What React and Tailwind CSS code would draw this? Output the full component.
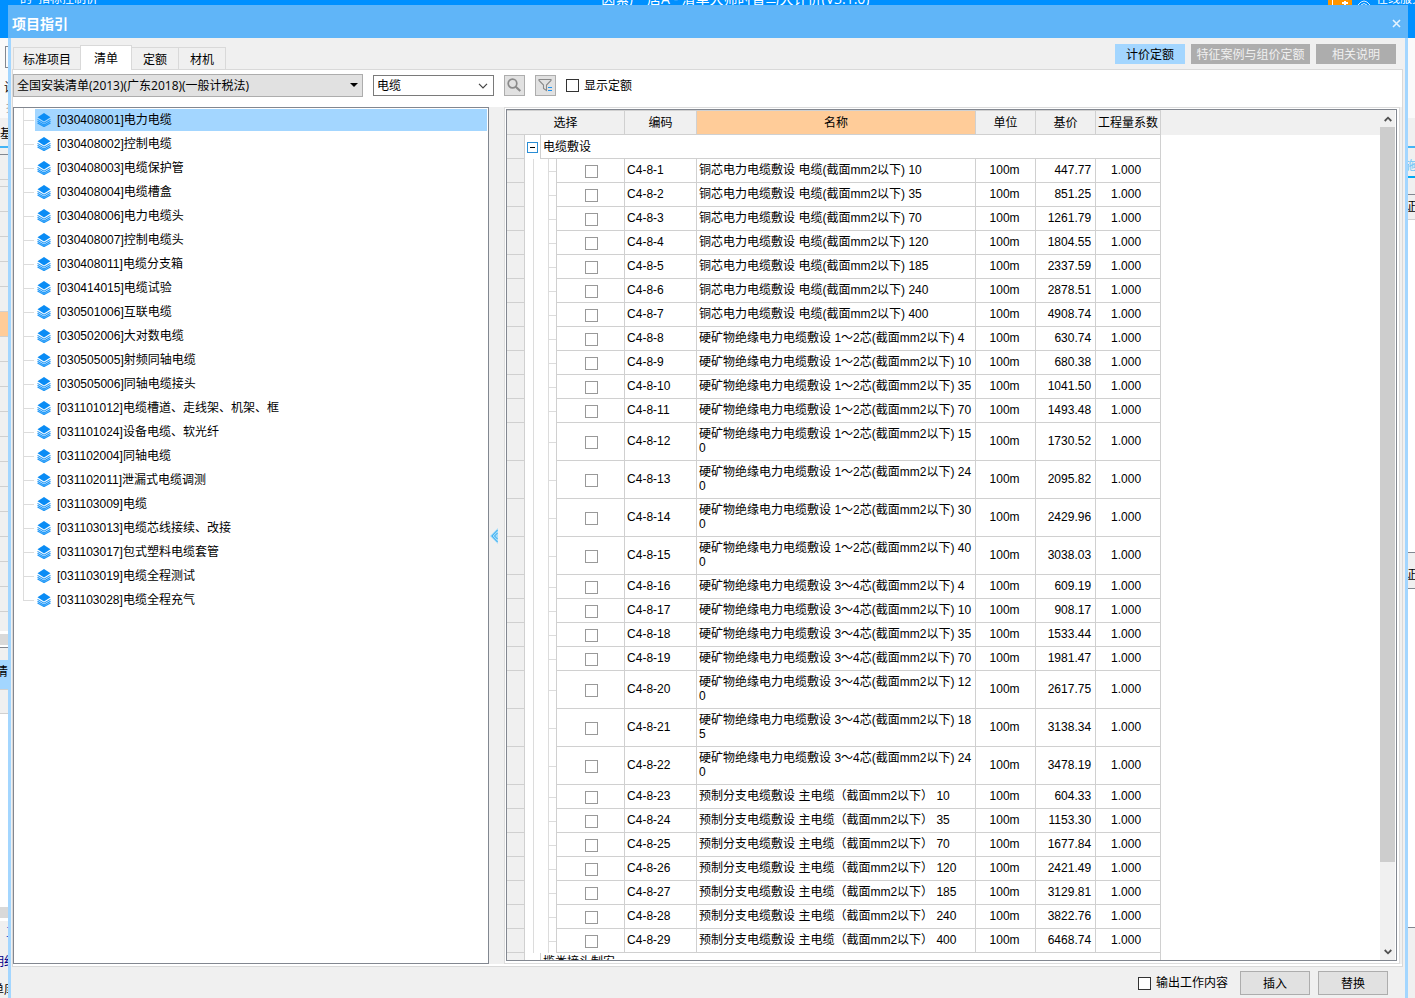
import React, { useState } from "react";
import clsx from "clsx";

const treeItems = [
  ["030408001", "电力电缆"],
  ["030408002", "控制电缆"],
  ["030408003", "电缆保护管"],
  ["030408004", "电缆槽盒"],
  ["030408006", "电力电缆头"],
  ["030408007", "控制电缆头"],
  ["030408011", "电缆分支箱"],
  ["030414015", "电缆试验"],
  ["030501006", "互联电缆"],
  ["030502006", "大对数电缆"],
  ["030505005", "射频同轴电缆"],
  ["030505006", "同轴电缆接头"],
  ["031101012", "电缆槽道、走线架、机架、框"],
  ["031101024", "设备电缆、软光纤"],
  ["031102004", "同轴电缆"],
  ["031102011", "泄漏式电缆调测"],
  ["031103009", "电缆"],
  ["031103013", "电缆芯线接续、改接"],
  ["031103017", "包式塑料电缆套管"],
  ["031103019", "电缆全程测试"],
  ["031103028", "电缆全程充气"],
];

const copper = "铜芯电力电缆敷设 电缆(截面mm2以下) ";
const mineral2 = "硬矿物绝缘电力电缆敷设 1～2芯(截面mm2以下) ";
const mineral4 = "硬矿物绝缘电力电缆敷设 3～4芯(截面mm2以下) ";
const branch = "预制分支电缆敷设 主电缆（截面mm2以下） ";

const quotas = [
  [copper + "10", "447.77"],
  [copper + "35", "851.25"],
  [copper + "70", "1261.79"],
  [copper + "120", "1804.55"],
  [copper + "185", "2337.59"],
  [copper + "240", "2878.51"],
  [copper + "400", "4908.74"],
  [mineral2 + "4", "630.74"],
  [mineral2 + "10", "680.38"],
  [mineral2 + "35", "1041.50"],
  [mineral2 + "70", "1493.48"],
  [mineral2 + "150", "1730.52"],
  [mineral2 + "240", "2095.82"],
  [mineral2 + "300", "2429.96"],
  [mineral2 + "400", "3038.03"],
  [mineral4 + "4", "609.19"],
  [mineral4 + "10", "908.17"],
  [mineral4 + "35", "1533.44"],
  [mineral4 + "70", "1981.47"],
  [mineral4 + "120", "2617.75"],
  [mineral4 + "185", "3138.34"],
  [mineral4 + "240", "3478.19"],
  [branch + "10", "604.33"],
  [branch + "35", "1153.30"],
  [branch + "70", "1677.84"],
  [branch + "120", "2421.49"],
  [branch + "185", "3129.81"],
  [branch + "240", "3822.76"],
  [branch + "400", "6468.74"],
];

function LayersIcon() {
  return (
    <svg width="14" height="14" viewBox="0 0 14 14" className="shrink-0" aria-hidden="true">
      <path d="M7 0 13.5 4.2 7 8.4 .5 4.2Z" fill="#0a8cf5" />
      <path
        d="M.5 6.4 7 10.2 13.5 6.4M.5 8.2 7 12 13.5 8.2M.5 10 7 13.6 13.5 10"
        fill="none"
        stroke="#1d97f8"
        strokeWidth="1.1"
      />
    </svg>
  );
}

const tabs = [
  { name: "标准项目", pad: "border-l px-[9px]" },
  { name: "清单", pad: "border-l px-[13px]" },
  { name: "定额", pad: "px-[11px]" },
  { name: "材机", pad: "px-[11px]" },
];

function Tabs() {
  const [active, setActive] = useState("清单");
  return (
    <div role="tablist" className="flex items-end pl-0.5">
      {tabs.map(({ name, pad }) => (
        <button
          key={name}
          role="tab"
          aria-selected={name === active}
          onClick={() => setActive(name)}
          className={clsx(
            "border-t border-[#d9d9d9] pt-0.5 leading-4",
            pad,
            name === active ? "relative -mb-px h-[25px] border-r bg-white" : "h-[22px] bg-[#f0f0f0]",
            name !== active && name !== "标准项目" && "border-r"
          )}
        >
          {name}
        </button>
      ))}
    </div>
  );
}

function Toolbar() {
  return (
    <div className="flex h-[37px] items-start pt-1">
      <div className="relative w-[350px]">
        <select
          aria-label="清单库"
          className="block h-[23px] w-full appearance-none border border-[#adadad] bg-[#e1e1e1] pl-[3px] leading-4"
        >
          <option>全国安装清单(2013)(广东2018)(一般计税法)</option>
        </select>
        <svg width="8" height="4" viewBox="0 0 8 4" className="pointer-events-none absolute top-[9px] right-[5px]">
          <path d="M0 0H8L4 4Z" fill="#000" />
        </svg>
      </div>
      <div className="mt-px ml-2.5 flex h-[21px] w-[121px] items-center border border-[#7a7a7a] bg-white">
        <input aria-label="关键字" defaultValue="电缆" className="min-w-0 flex-1 pl-[3px] leading-4 outline-none" />
        <button aria-label="展开" className="w-[15px]">
          <svg width="10" height="6" viewBox="0 0 10 6">
            <path d="M1 .8 5 4.8 9 .8" fill="none" stroke="#444" strokeWidth="1.2" />
          </svg>
        </button>
      </div>
      <button aria-label="查找" className="mt-px ml-2.5 flex size-[21px] items-center justify-center border border-[#adadad] bg-[#e1e1e1]">
        <svg width="15" height="15" viewBox="0 0 15 15" fill="none" stroke="#8a8a8a">
          <circle cx="5.5" cy="5.5" r="4.3" strokeWidth="1.7" />
          <path d="M8.7 8.7 13.3 13" strokeWidth="2.2" />
        </svg>
      </button>
      <button aria-label="筛选" className="mt-px ml-2.5 flex size-[21px] items-center justify-center border border-[#adadad] bg-[#e1e1e1]">
        <svg width="15" height="15" viewBox="0 0 15 15" fill="none">
          <path d="M1 1.5H13V2.5L8.5 7V12.5L5.5 10.5V7L1 2.5Z" stroke="#8a8a8a" strokeWidth="1.1" />
          <path d="M10 9.5H14M10 12.5H14" stroke="#1a94f5" strokeWidth="1" />
        </svg>
      </button>
      <label className="ml-2.5 flex h-[23px] items-center gap-[5px]">
        <input type="checkbox" className="size-[13px] appearance-none border border-[#333] bg-white checked:bg-[#333]" />
        显示定额
      </label>
    </div>
  );
}

function Tree() {
  const [selected, setSelected] = useState("030408001");
  return (
    <ul className="w-[476px] shrink-0 overflow-hidden border border-[#828790] bg-white pr-px">
      {treeItems.map(([code, name], i) => {
        const last = i === treeItems.length - 1;
        return (
          <li key={code} className="flex h-6">
            <div className="flex w-[21px] shrink-0 flex-col pr-px pl-[9px]">
              <div className="h-[13px] border-b border-l border-[#dcdcdc]" />
              <div className={clsx("h-[11px]", !last && "border-l border-[#dcdcdc]")} />
            </div>
            <button
              onClick={() => setSelected(code)}
              className={clsx(
                "my-px flex flex-1 items-center gap-1.5 pl-0.5 text-left leading-4",
                code === selected && "bg-[#a3d6ff]"
              )}
            >
              <LayersIcon />
              <span className="font-['Liberation_Sans','Noto_Sans_CJK_SC',sans-serif]">
                [{code}]{name}
              </span>
            </button>
          </li>
        );
      })}
    </ul>
  );
}

function QuotaRow({ index, name, price }) {
  const cell = "border-r border-b border-[#d0d0d0]";
  return (
    <tr className="h-6">
      <td className={clsx(cell, "bg-[#f0f0f0]")} />
      <td className="border-r border-[#dcdcdc]" />
      <td colSpan={2} className="border-r border-[#dcdcdc]" />
      <td className="border-r border-[#d0d0d0]">
        <div className="h-px bg-[#dcdcdc]" />
      </td>
      <td className={clsx(cell, "pt-0.5 pl-0.5 text-center")}>
        <input
          type="checkbox"
          aria-label={`C4-8-${index}`}
          className="mx-auto block size-[13px] appearance-none border border-[#999] bg-white checked:bg-[#999]"
        />
      </td>
      <td className={clsx(cell, "pb-px pl-0.5")}>C4-8-{index}</td>
      <td className={clsx(cell, "pt-1 pr-0.5 pb-[5px] pl-0.5 break-all")}>{name}</td>
      <td className={clsx(cell, "pr-0.5 pb-px text-center")}>100m</td>
      <td className={clsx(cell, "pr-1 pb-px text-right")}>{price}</td>
      <td className={clsx(cell, "pr-1 pb-px text-center")}>1.000</td>
    </tr>
  );
}

function GroupRow({ title, open }) {
  return (
    <tr className="h-6">
      <td className="border-r border-b border-[#d0d0d0] bg-[#f0f0f0]" />
      <td colSpan={2} className="border-r border-[#d0d0d0]">
        {open && (
          <button aria-label="折叠" className="mx-auto flex size-[11px] items-center justify-center border border-[#2a8dd4] bg-white">
            <span className="h-px w-[5px] bg-black" />
          </button>
        )}
      </td>
      <td colSpan={8} className={clsx("border-r border-b border-[#d0d0d0] pl-0.5", !open && "pt-0.5 align-top")}>
        {title}
      </td>
    </tr>
  );
}

function QuotaTable() {
  const head = "border-t border-r border-b border-[#d0d0d0] bg-[#f0f0f0] font-normal";
  return (
    <table className="w-[654px] shrink-0 table-fixed border-separate border-spacing-0 self-start font-['Liberation_Sans','Noto_Sans_CJK_SC',sans-serif] leading-[14px]">
      <colgroup>
        <col className="w-[18px]" />
        <col className="w-[9px]" />
        <col className="w-[7px]" />
        <col className="w-[8px]" />
        <col className="w-[8px]" />
        <col className="w-[68px]" />
        <col className="w-[72px]" />
        <col className="w-[279px]" />
        <col className="w-[60px]" />
        <col className="w-[60px]" />
        <col className="w-[65px]" />
      </colgroup>
      <thead>
        <tr className="h-[25px]">
          <th colSpan={6} className={head}>选择</th>
          <th className={head}>编码</th>
          <th className="border-t border-r border-b border-[#d0d0d0] bg-[#ffcc99] font-normal">名称</th>
          <th className={head}>单位</th>
          <th className={head}>基价</th>
          <th className={clsx(head, "whitespace-nowrap")}>工程量系数</th>
        </tr>
      </thead>
      <tbody>
        <GroupRow title="电缆敷设" open />
        {quotas.map(([name, price], i) => (
          <QuotaRow key={i} index={i + 1} name={name} price={price} />
        ))}
        <GroupRow title="揽类接头制安" />
      </tbody>
    </table>
  );
}

function ScrollBar() {
  return (
    <div className="mr-px flex w-[15px] shrink-0 flex-col bg-[#f0f0f0]">
      <button aria-label="向上" className="flex h-[17px] shrink-0 items-center justify-center">
        <svg width="8" height="6" viewBox="0 0 8 6">
          <path d="M.7 5 4 1.7 7.3 5" fill="none" stroke="#505050" strokeWidth="1.8" />
        </svg>
      </button>
      <div className="flex-[734] bg-[#cdcdcd]" />
      <div className="flex-[82]" />
      <button aria-label="向下" className="flex h-4 shrink-0 items-center justify-center">
        <svg width="8" height="6" viewBox="0 0 8 6">
          <path d="M.7 1 4 4.3 7.3 1" fill="none" stroke="#505050" strokeWidth="1.8" />
        </svg>
      </button>
    </div>
  );
}

function GridLines({ count }) {
  return Array.from({ length: count }, (_, i) => (
    <div key={i} className="h-[25px] shrink-0 border-b border-[#d0d0d0]" />
  ));
}

// slivers of the main window that stay visible beside the dialog
function LeftEdge() {
  return (
    <div aria-hidden="true" className="flex w-2 shrink-0 flex-col overflow-hidden bg-[#f0f0f0] whitespace-nowrap">
      <div className="h-[33px] shrink-0 bg-[#0090ff]" />
      <div className="h-20 shrink-0 bg-[#fafafa]">
        <div className="mt-2 ml-[5px] h-[22px] w-4 border border-[#828790]" />
        <div className="mt-3 pl-1 leading-4">设</div>
        <div className="mt-1 pl-1.5 leading-4 text-[#aaa]">报</div>
      </div>
      <div className="h-7 shrink-0 pt-2 leading-4">基</div>
      <div className="h-0.5 shrink-0 bg-[#43b4f5]" />
      <div className="h-[7px] shrink-0 border-b border-[#828790]" />
      <div className="h-[25px] shrink-0 border-b border-[#d0d0d0]" />
      <div className="h-[7px] shrink-0 border-b border-[#d0d0d0]" />
      <GridLines count={5} />
      <div className="h-[25px] shrink-0 border-b border-[#d0d0d0] bg-[#ffcc99]" />
      <GridLines count={11} />
      <div className="h-[19px] shrink-0" />
      <div className="h-4 shrink-0 border-t-[3px] border-b-2 border-white bg-[#d9d9d9]" />
      <div className="h-[13px] shrink-0 border-t border-[#828790]" />
      <div className="h-[29px] shrink-0 bg-[#a3d6ff] pt-1 leading-4">
        <span className="-ml-1">清</span>
      </div>
      <div className="h-[25px] shrink-0 border-t border-b border-[#d0d0d0]" />
      <div className="flex-[193] bg-white" />
      <div className="h-[14px] shrink-0 border-b-[3px] border-white bg-[#d9d9d9]" />
      <div className="h-[33px] shrink-0 pt-1 pl-1.5 leading-4 text-[#2a5fd0]">工</div>
      <div className="h-7 shrink-0 leading-4 text-[#00008b]">
        <span className="-ml-2">明细</span>
      </div>
      <div className="h-4 shrink-0 leading-4">
        <span className="-ml-2">单库</span>
      </div>
    </div>
  );
}

function RightEdge() {
  return (
    <div aria-hidden="true" className="flex w-[7px] shrink-0 flex-col overflow-hidden bg-[#f0f0f0] whitespace-nowrap">
      <div className="h-[33px] shrink-0 bg-[#0090ff]" />
      <div className="h-20 shrink-0 bg-[#fafafa]" />
      <div className="h-[30px] shrink-0 border-b-2 border-[#43b4f5]" />
      <div className="h-[30px] shrink-0 border-b-2 border-[#00a8f3] pt-2.5 leading-4 text-[#6cc4f7]">
        <span className="-ml-1">施</span>
      </div>
      <div className="h-[17px] shrink-0 border-b border-[#828790]" />
      <div className="h-[25px] shrink-0 border-b border-[#d0d0d0] pt-1 leading-4">
        <span className="-ml-1">证</span>
      </div>
      <div className="flex-[332] bg-white" />
      <div className="h-[37px] shrink-0 border-t border-b border-[#828790] pt-3.5 leading-4">
        <span className="-ml-1">证</span>
      </div>
      <div className="flex-[338] bg-white" />
      <div className="h-[71px] shrink-0 border-t border-[#828790]" />
    </div>
  );
}

function App() {
  return (
    <div className="flex h-screen flex-col overflow-hidden bg-[#f0f0f0] font-['Open_Sans','Noto_Sans_CJK_SC',sans-serif] text-[12px] text-black">
      <div aria-hidden="true" className="flex h-[5px] shrink-0 items-end overflow-hidden bg-[#0090ff] leading-3 whitespace-nowrap text-white">
        <div className="flex flex-[5] gap-1.5 pl-5">
          <span>的</span>
          <span>指标控制价</span>
        </div>
        <div className="flex-[5] text-[14px] leading-3">因素厂 居A - 清单大师时智马大计价(V3.1.0)</div>
        <div className="flex flex-[2] items-end justify-end gap-[5px]">
          <span className="flex h-[5px] w-6 items-end justify-around bg-[#ff9500]">
            <span className="h-[5px] w-px bg-white" />
            <svg width="6" height="4" viewBox="0 0 6 4">
              <path d="M2 0H4V1H6V3H4V4H2V3H0V1H2Z" fill="#fff" />
            </svg>
          </span>
          <svg width="14" height="5" viewBox="0 0 14 5">
            <path d="M1 5Q7-3 13 5M4 5Q7 2 10 5" fill="none" stroke="#d8edff" />
          </svg>
          <span className="w-[39px] overflow-hidden">在线服务</span>
        </div>
      </div>

      <div className="flex min-h-0 flex-1">
        <LeftEdge />
        <div role="dialog" aria-labelledby="dialog-title" className="flex min-w-0 flex-1 flex-col">
          <div className="flex h-[33px] shrink-0 items-center justify-between bg-[#60b5f8] pt-1 pr-[5px] pl-1 text-white">
            <h1 id="dialog-title" className="text-[14px] leading-5 font-bold">项目指引</h1>
            <button aria-label="关闭" className="p-0.5">
              <svg width="9" height="9" viewBox="0 0 9 9">
                <path d="M1 1 8 8M8 1 1 8" stroke="#e4f3ff" strokeWidth="1.6" />
              </svg>
            </button>
          </div>

          <div className="flex min-h-0 flex-1 flex-col border-x-[3px] border-[#a3d6ff]">
            <div className="flex h-[31px] shrink-0 items-end justify-between">
              <Tabs />
              <div className="flex gap-1.5 self-start pt-1.5 pr-[9px] leading-4">
                <button className="h-5 w-[70px] bg-[#a3d6ff] pt-0.5">计价定额</button>
                <button className="h-5 w-[119px] bg-[#adadad] pt-px text-[#f0f0f0]">特征案例与组价定额</button>
                <button className="h-5 w-20 bg-[#adadad] pt-px text-[#f0f0f0]">相关说明</button>
              </div>
            </div>

            <div className="mr-0.5 ml-px flex min-h-0 flex-1 flex-col border border-[#d9d9d9] bg-white">
              <Toolbar />
              <div className="flex min-h-0 flex-1 bg-[#f0f0f0]">
                <Tree />
                <div className="flex w-[15px] shrink-0 items-center pl-px">
                  <button aria-label="收起">
                    <svg width="8" height="16" viewBox="0 0 8 16">
                      <path d="M8 0V16L0 8Z" fill="#a5dcfa" />
                      <path d="M7.5 2 1.8 8 7.5 14M7.5 5 4.5 8 7.5 11" fill="none" stroke="#2aa6ee" />
                    </svg>
                  </button>
                </div>
                <div className="mr-0.5 flex min-w-0 flex-1 border border-[#dcdcdc] bg-white pt-px pr-0.5 pb-0.5 pl-px">
                  <div className="flex min-w-0 flex-1 overflow-hidden border border-[#828790]">
                    <QuotaTable />
                    <div className="h-[25px] flex-1 bg-[#f0f0f0]" />
                    <ScrollBar />
                  </div>
                </div>
              </div>
              <div className="h-0.5 shrink-0" />
            </div>

            <div className="flex h-[31px] shrink-0 items-start justify-end gap-2 pt-1 pr-[17px] leading-4">
              <label className="mr-1 flex h-6 items-center gap-[5px]">
                <input type="checkbox" className="size-[13px] appearance-none border border-[#333] bg-white checked:bg-[#333]" />
                输出工作内容
              </label>
              <button className="h-6 w-[70px] border border-[#adadad] bg-[#e1e1e1] pt-px">插入</button>
              <button className="h-6 w-[70px] border border-[#adadad] bg-[#e1e1e1] pt-px">替换</button>
            </div>
          </div>
        </div>
        <RightEdge />
      </div>
    </div>
  );
}

export default App;
